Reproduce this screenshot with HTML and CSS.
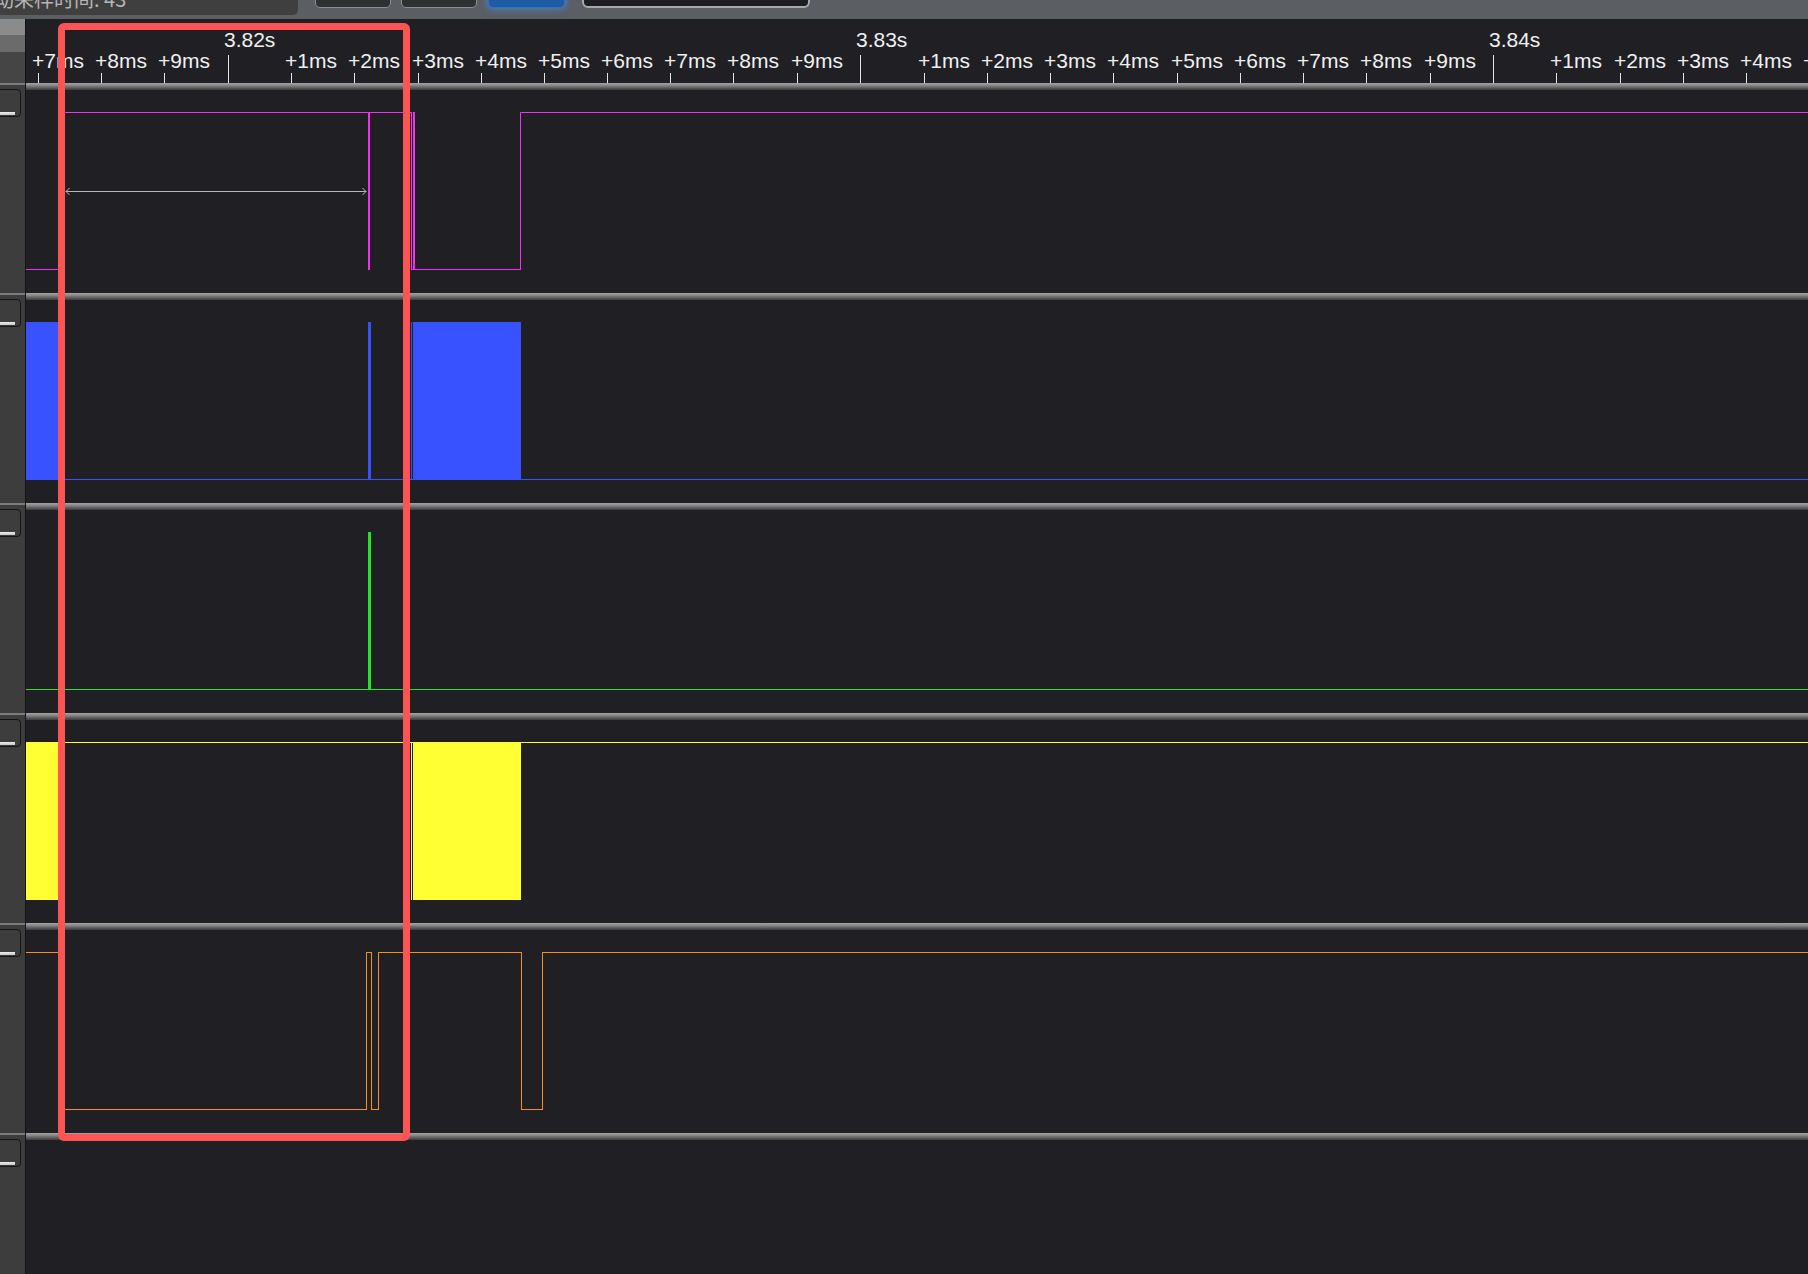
FILE: index.html
```html
<!DOCTYPE html>
<html lang="zh">
<head>
<meta charset="utf-8">
<title>Logic analyzer</title>
<link rel="stylesheet" href="styles.css">
</head>
<body>
<div class="app">
  <div class="topbar">
    <div class="status"><span class="status-text">动采样时间: 43</span></div>
    <div class="btn btn-first"></div>
    <div class="btn btn-second"></div>
    <div class="btn btn-primary"></div>
    <div class="field"></div>
  </div>
  <div class="workspace">
    <div class="sidebar">
      <div class="corner"></div>
      <div class="side-row"><div class="ch-btn"><span class="ch-bar"></span></div></div>
      <div class="side-row"><div class="ch-btn"><span class="ch-bar"></span></div></div>
      <div class="side-row"><div class="ch-btn"><span class="ch-bar"></span></div></div>
      <div class="side-row"><div class="ch-btn"><span class="ch-bar"></span></div></div>
      <div class="side-row"><div class="ch-btn"><span class="ch-bar"></span></div></div>
      <div class="side-row"><div class="ch-btn"><span class="ch-bar"></span></div></div>
    </div>
    <div class="canvas">
      <svg class="ruler" viewBox="26 0 1782 64" width="1782" height="64">
        <path class="tick" d="M38.5 54V64M101.5 54V64M164.5 54V64M291.5 54V64M354.5 54V64M418.5 54V64M481.5 54V64M544.5 54V64M607.5 54V64M670.5 54V64M733.5 54V64M797.5 54V64M924.5 54V64M987.5 54V64M1050.5 54V64M1113.5 54V64M1177.5 54V64M1240.5 54V64M1303.5 54V64M1366.5 54V64M1430.5 54V64M1556.5 54V64M1620.5 54V64M1683.5 54V64M1746.5 54V64M228.5 36V64M860.5 36V64M1493.5 36V64"/>
        <text class="lbl" x="224" y="28">3.82s</text>
        <text class="lbl" x="856" y="28">3.83s</text>
        <text class="lbl" x="1489" y="28">3.84s</text>
        <text class="lbl" x="32" y="49">+7ms</text>
        <text class="lbl" x="95" y="49">+8ms</text>
        <text class="lbl" x="158" y="49">+9ms</text>
        <text class="lbl" x="285" y="49">+1ms</text>
        <text class="lbl" x="348" y="49">+2ms</text>
        <text class="lbl" x="412" y="49">+3ms</text>
        <text class="lbl" x="475" y="49">+4ms</text>
        <text class="lbl" x="538" y="49">+5ms</text>
        <text class="lbl" x="601" y="49">+6ms</text>
        <text class="lbl" x="664" y="49">+7ms</text>
        <text class="lbl" x="727" y="49">+8ms</text>
        <text class="lbl" x="791" y="49">+9ms</text>
        <text class="lbl" x="918" y="49">+1ms</text>
        <text class="lbl" x="981" y="49">+2ms</text>
        <text class="lbl" x="1044" y="49">+3ms</text>
        <text class="lbl" x="1107" y="49">+4ms</text>
        <text class="lbl" x="1171" y="49">+5ms</text>
        <text class="lbl" x="1234" y="49">+6ms</text>
        <text class="lbl" x="1297" y="49">+7ms</text>
        <text class="lbl" x="1360" y="49">+8ms</text>
        <text class="lbl" x="1424" y="49">+9ms</text>
        <text class="lbl" x="1550" y="49">+1ms</text>
        <text class="lbl" x="1614" y="49">+2ms</text>
        <text class="lbl" x="1677" y="49">+3ms</text>
        <text class="lbl" x="1740" y="49">+4ms</text>
        <text class="lbl" x="1803" y="49">+5ms</text>
      </svg>

      <div class="channel">
        <div class="sep"></div>
        <svg class="wave" viewBox="26 0 1782 203" width="1782" height="203">
          <path class="line-magenta" d="M26 179.5H61.5V22.5H368.5V179.5H369.5V22.5H411.5V179.5H413.5V22.5H414.5V179.5H520.5V22.5H1808"/>
          <path class="measure" d="M66 101.5H366"/>
          <path class="measure" d="M69.5 98L66 101.5L69.5 105"/>
          <path class="measure" d="M362.5 98L366 101.5L362.5 105"/>
        </svg>
      </div>

      <div class="channel">
        <div class="sep"></div>
        <svg class="wave" viewBox="26 0 1782 203" width="1782" height="203">
          <g class="fill-blue">
            <rect x="26" y="179" width="1782" height="1"/>
            <rect x="26" y="22" width="35" height="158"/>
            <rect x="368" y="22" width="3" height="158"/>
            <rect x="411" y="22" width="1" height="158"/>
            <rect x="413" y="22" width="108" height="158"/>
          </g>
        </svg>
      </div>

      <div class="channel">
        <div class="sep"></div>
        <svg class="wave" viewBox="26 0 1782 203" width="1782" height="203">
          <g class="fill-green">
            <rect x="26" y="179" width="1782" height="1"/>
            <rect x="368" y="22" width="3" height="158"/>
          </g>
        </svg>
      </div>

      <div class="channel">
        <div class="sep"></div>
        <svg class="wave" viewBox="26 0 1782 203" width="1782" height="203">
          <g class="fill-yellow">
            <rect x="26" y="22" width="1782" height="1"/>
            <rect x="26" y="22" width="35" height="158"/>
            <rect x="411" y="22" width="1" height="158"/>
            <rect x="413" y="22" width="108" height="158"/>
          </g>
        </svg>
      </div>

      <div class="channel">
        <div class="sep"></div>
        <svg class="wave" viewBox="26 0 1782 203" width="1782" height="203">
          <path class="line-orange" d="M26 22.5H61.5V179.5H366.5V22.5H371.5V179.5H378.5V22.5H521.5V179.5H542.5V22.5H1808"/>
        </svg>
      </div>

      <div class="channel">
        <div class="sep"></div>
        <svg class="wave" viewBox="26 0 1782 203" width="1782" height="203"></svg>
      </div>
    </div>
  </div>
  <div class="highlight"></div>
</div>
</body>
</html>
```

FILE: styles.css
```css
html, body {
  margin: 0;
  padding: 0;
}

body {
  background: #1f1f24;
  overflow: hidden;
  font-family: "Liberation Sans", "Noto Sans CJK SC", sans-serif;
}

.app {
  position: relative;
  width: 1808px;
  height: 1274px;
  overflow: hidden;
  display: flex;
  flex-direction: column;
  background: #1f1f24;
}

/* ---------- top bar ---------- */
.topbar {
  flex: none;
  height: 19px;
  background: #5b5e63;
  display: flex;
  align-items: flex-start;
  overflow: hidden;
}

.status {
  flex: none;
  width: 298px;
  height: 15px;
  background: #3f3f3f;
  border-radius: 0 0 5px 0;
  overflow: hidden;
}

.status-text {
  display: block;
  margin: -11px 0 0 -6px;
  font-family: "Noto Sans CJK SC", "Liberation Sans", sans-serif;
  font-size: 20px;
  line-height: 20px;
  color: #b4b4b4;
  white-space: nowrap;
}

.btn {
  flex: none;
  width: 76px;
  height: 18px;
  margin-top: -10px;
  box-sizing: border-box;
  border: 1px solid #8e8e8e;
  border-radius: 5px;
  background: #2f3032;
}

.btn-first {
  margin-left: 17px;
}

.btn-second {
  margin-left: 10px;
}

.btn-primary {
  width: 77px;
  margin-left: 11px;
  background: #1f5ca4;
  border-color: #2f72c4;
  box-shadow: 0 0 6px 2px rgba(64, 150, 235, 0.55);
}

.field {
  flex: none;
  width: 228px;
  height: 18px;
  margin-top: -10px;
  margin-left: 17px;
  box-sizing: border-box;
  border: 2px solid #a8a8a8;
  border-radius: 6px;
  background: #1d1d21;
}

/* ---------- workspace ---------- */
.workspace {
  flex: 1;
  min-height: 0;
  display: flex;
  overflow: hidden;
}

.sidebar {
  flex: none;
  width: 25px;
  border-right: 1px solid #131313;
  background: #3d3d3d;
  display: flex;
  flex-direction: column;
}

.corner {
  flex: none;
  height: 64px;
  background: linear-gradient(#8b8b8b 0, #8b8b8b 16px, #6b6b6b 16px, #6b6b6b 33px, #454545 33px, #454545 100%);
}

.side-row {
  flex: none;
  height: 210px;
  box-sizing: border-box;
  border-top: 2px solid #7c7c7c;
  padding-top: 4px;
}

.ch-btn {
  width: 27px;
  height: 28px;
  margin-left: -6px;
  box-sizing: border-box;
  border: 1px solid #141414;
  border-radius: 4px;
  background: #3d3d3d;
  display: flex;
  align-items: flex-end;
  padding-bottom: 1px;
}

.ch-bar {
  display: block;
  width: 20px;
  height: 3px;
  background: linear-gradient(#f0f0f0, #c4c4c4);
}

.canvas {
  flex: 1;
  min-width: 0;
  display: flex;
  flex-direction: column;
  background: #1f1f24;
}

.ruler {
  display: block;
  flex: none;
  width: 1782px;
  height: 64px;
}

.tick {
  fill: none;
  stroke: #e4e4e4;
  stroke-width: 1;
  shape-rendering: crispEdges;
}

.lbl {
  font-family: "Liberation Sans", sans-serif;
  font-size: 21px;
  fill: #f0f0f0;
}

.channel {
  flex: none;
  height: 210px;
  display: flex;
  flex-direction: column;
}

.sep {
  flex: none;
  height: 7px;
  background: linear-gradient(#a4a4a4 0%, #8c8c8c 30%, #626262 65%, #3a3a3a 100%);
}

.wave {
  display: block;
  flex: none;
  width: 1782px;
  height: 203px;
}

.line-magenta {
  fill: none;
  stroke: #f52ef5;
  stroke-width: 1;
  shape-rendering: crispEdges;
}

.line-orange {
  fill: none;
  stroke: #ff8c22;
  stroke-width: 1;
  shape-rendering: crispEdges;
}

.measure {
  fill: none;
  stroke: #b8b8b8;
  stroke-width: 1;
}

.fill-blue {
  fill: #3852ff;
}

.fill-green {
  fill: #26e226;
}

.fill-yellow {
  fill: #ffff33;
}

/* ---------- annotation overlay ---------- */
.highlight {
  position: absolute;
  left: 58px;
  top: 23px;
  width: 352px;
  height: 1118px;
  box-sizing: border-box;
  border: 7px solid #ff5454;
  border-radius: 6px;
  pointer-events: none;
}
```
